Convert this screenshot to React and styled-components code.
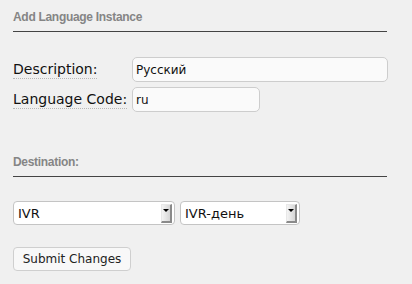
import React, { useState } from "react";
import styled, { createGlobalStyle } from "styled-components";

const GlobalStyle = createGlobalStyle`
  html, body {
    margin: 0;
    padding: 0;
    background: #f0f0f0;
  }
  body {
    font-family: "DejaVu Sans", Verdana, sans-serif;
    color: #111;
  }
`;

// page column
const Page = styled.div`
  width: 374px;
  padding: 0 0 0 13px;
`;

// grey bold section heading with a rule under it
const SectionTitle = styled.div`
  font-family: "Liberation Sans", Arial, sans-serif;
  font-weight: bold;
  font-size: 12px;
  letter-spacing: -0.3px;
  line-height: 14px;
  color: #858585;
  padding: 10px 0 7px;
  margin-top: ${(p) => p.$top || 0}px;
  border-bottom: 1px solid #444;
`;

// label / input grid
const Fields = styled.div`
  display: grid;
  grid-template-columns: 119px auto;
  row-gap: 5px;
  align-items: center;
  margin-top: 25px;
`;

const Label = styled.label`
  justify-self: start;
  font-size: 14px;
  line-height: 17px;
  color: #111;
  border-bottom: 1px dotted #b8b8b8;
`;

const TextInput = styled.input`
  box-sizing: border-box;
  width: ${(p) => p.$width}px;
  height: 25px;
  padding: 0 3px;
  font-family: "DejaVu Sans", Verdana, sans-serif;
  font-size: 12px;
  color: #111;
  background: #fafafa;
  border: 1px solid #cdcdcd;
  border-radius: 5px;
  outline: none;
`;

const SelectRow = styled.div`
  display: flex;
  gap: 5px;
  margin-top: 24px;
`;

// select box with a classic grey arrow button
const SelectBox = styled.div`
  box-sizing: border-box;
  display: flex;
  align-items: center;
  width: ${(p) => p.$width}px;
  height: 24px;
  background: #fff;
  border: 1px solid #c4c4c4;
  border-radius: 4px;
  padding: 0 2px 0 0;
`;

const NativeSelect = styled.select`
  flex: 1;
  min-width: 0;
  height: 100%;
  appearance: none;
  border: none;
  background: transparent;
  padding: 0 4px;
  font-family: "DejaVu Sans", Verdana, sans-serif;
  font-size: 13px;
  color: #111;
  outline: none;
`;

const Arrow = styled.span`
  box-sizing: border-box;
  width: 11px;
  height: 19px;
  display: flex;
  align-items: center;
  justify-content: center;
  background: linear-gradient(to right, #f4f4f4, #d6d6d6);
  border-right: 2px solid #8a8a8a;
  border-bottom: 2px solid #8a8a8a;
  border-top: 1px solid #e8e8e8;
  border-left: 1px solid #e8e8e8;

  &::after {
    content: "";
    border-left: 3px solid transparent;
    border-right: 3px solid transparent;
    border-top: 3px solid #000;
    margin-bottom: 4px;
  }
`;

const SubmitButton = styled.button`
  box-sizing: border-box;
  display: block;
  margin-top: 22px;
  width: 118px;
  height: 24px;
  padding: 0;
  font-family: "DejaVu Sans", Verdana, sans-serif;
  font-size: 12px;
  color: #222;
  background: #f8f8f8;
  border: 1px solid #cfcfcf;
  border-radius: 4px;
  cursor: pointer;
`;

function App() {
  const [description, setDescription] = useState("Русский");
  const [code, setCode] = useState("ru");

  return (
    <>
      <GlobalStyle />
      <Page>
        <SectionTitle>Add Language Instance</SectionTitle>
        <Fields>
          <Label>Description:</Label>
          <TextInput
            $width={256}
            value={description}
            onChange={(e) => setDescription(e.target.value)}
          />
          <Label>Language Code:</Label>
          <TextInput
            $width={128}
            value={code}
            onChange={(e) => setCode(e.target.value)}
          />
        </Fields>

        <SectionTitle $top={33}>Destination:</SectionTitle>
        <SelectRow>
          <SelectBox $width={162}>
            <NativeSelect defaultValue="ivr">
              <option value="ivr">IVR</option>
            </NativeSelect>
            <Arrow />
          </SelectBox>
          <SelectBox $width={120}>
            <NativeSelect defaultValue="day">
              <option value="day">IVR-день</option>
            </NativeSelect>
            <Arrow />
          </SelectBox>
        </SelectRow>

        <SubmitButton>Submit Changes</SubmitButton>
      </Page>
    </>
  );
}

export default App;
